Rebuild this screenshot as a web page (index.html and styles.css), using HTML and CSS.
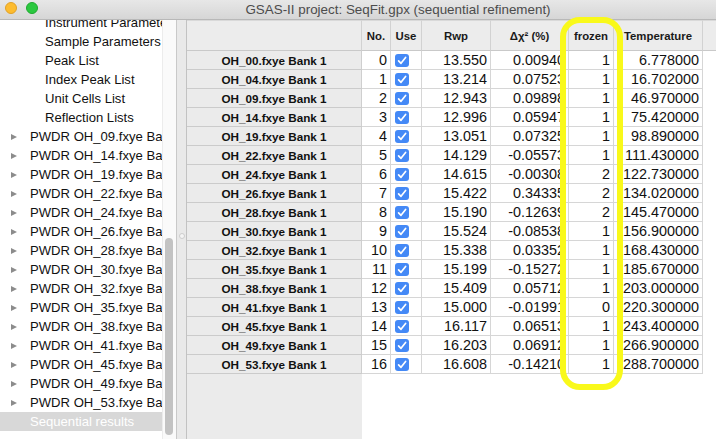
FILE: index.html
```html
<!DOCTYPE html>
<html>
<head>
<meta charset="utf-8">
<link rel="stylesheet" href="styles.css">
</head>
<body>
<div class="window">
  <div class="titlebar">
    <div class="lights"><span class="light yellow"></span><span class="light green"></span></div>
    <div class="title">GSAS-II project: SeqFit.gpx (sequential refinement)</div>
  </div>
  <div class="main">
    <div class="tree">
      <div class="tree-list">
        <div class="tree-row child">Instrument Parameters</div>
        <div class="tree-row child">Sample Parameters</div>
        <div class="tree-row child">Peak List</div>
        <div class="tree-row child">Index Peak List</div>
        <div class="tree-row child">Unit Cells List</div>
        <div class="tree-row child">Reflection Lists</div>
        <div class="tree-row parent"><span class="tri"></span>PWDR OH_09.fxye Bank 1</div>
        <div class="tree-row parent"><span class="tri"></span>PWDR OH_14.fxye Bank 1</div>
        <div class="tree-row parent"><span class="tri"></span>PWDR OH_19.fxye Bank 1</div>
        <div class="tree-row parent"><span class="tri"></span>PWDR OH_22.fxye Bank 1</div>
        <div class="tree-row parent"><span class="tri"></span>PWDR OH_24.fxye Bank 1</div>
        <div class="tree-row parent"><span class="tri"></span>PWDR OH_26.fxye Bank 1</div>
        <div class="tree-row parent"><span class="tri"></span>PWDR OH_28.fxye Bank 1</div>
        <div class="tree-row parent"><span class="tri"></span>PWDR OH_30.fxye Bank 1</div>
        <div class="tree-row parent"><span class="tri"></span>PWDR OH_32.fxye Bank 1</div>
        <div class="tree-row parent"><span class="tri"></span>PWDR OH_35.fxye Bank 1</div>
        <div class="tree-row parent"><span class="tri"></span>PWDR OH_38.fxye Bank 1</div>
        <div class="tree-row parent"><span class="tri"></span>PWDR OH_41.fxye Bank 1</div>
        <div class="tree-row parent"><span class="tri"></span>PWDR OH_45.fxye Bank 1</div>
        <div class="tree-row parent"><span class="tri"></span>PWDR OH_49.fxye Bank 1</div>
        <div class="tree-row parent"><span class="tri"></span>PWDR OH_53.fxye Bank 1</div>
        <div class="tree-row selected">Sequential results</div>
      </div>
    </div>
    <div class="vscroll"><div class="thumb"></div></div>
    <div class="sash"><div class="grip"></div></div>
    <div class="grid">
      <div class="hc corner"></div>
      <div class="hc">No.</div>
      <div class="hc">Use</div>
      <div class="hc">Rwp</div>
      <div class="hc">Δχ² (%)</div>
      <div class="hc">frozen</div>
      <div class="hc">Temperature</div>
      <div class="hc filler"></div>

      <div class="rl">OH_00.fxye Bank 1</div><div class="c">0</div><div class="c use"><span class="cb"></span></div><div class="c">13.550</div><div class="c">0.00940</div><div class="c">1</div><div class="c">6.778000</div><div class="f"></div>
      <div class="rl">OH_04.fxye Bank 1</div><div class="c">1</div><div class="c use"><span class="cb"></span></div><div class="c">13.214</div><div class="c">0.07523</div><div class="c">1</div><div class="c">16.702000</div><div class="f"></div>
      <div class="rl">OH_09.fxye Bank 1</div><div class="c">2</div><div class="c use"><span class="cb"></span></div><div class="c">12.943</div><div class="c">0.09898</div><div class="c">1</div><div class="c">46.970000</div><div class="f"></div>
      <div class="rl">OH_14.fxye Bank 1</div><div class="c">3</div><div class="c use"><span class="cb"></span></div><div class="c">12.996</div><div class="c">0.05947</div><div class="c">1</div><div class="c">75.420000</div><div class="f"></div>
      <div class="rl">OH_19.fxye Bank 1</div><div class="c">4</div><div class="c use"><span class="cb"></span></div><div class="c">13.051</div><div class="c">0.07325</div><div class="c">1</div><div class="c">98.890000</div><div class="f"></div>
      <div class="rl">OH_22.fxye Bank 1</div><div class="c">5</div><div class="c use"><span class="cb"></span></div><div class="c">14.129</div><div class="c">-0.05573</div><div class="c">1</div><div class="c">111.430000</div><div class="f"></div>
      <div class="rl">OH_24.fxye Bank 1</div><div class="c">6</div><div class="c use"><span class="cb"></span></div><div class="c">14.615</div><div class="c">-0.00308</div><div class="c">2</div><div class="c">122.730000</div><div class="f"></div>
      <div class="rl">OH_26.fxye Bank 1</div><div class="c">7</div><div class="c use"><span class="cb"></span></div><div class="c">15.422</div><div class="c">0.34335</div><div class="c">2</div><div class="c">134.020000</div><div class="f"></div>
      <div class="rl">OH_28.fxye Bank 1</div><div class="c">8</div><div class="c use"><span class="cb"></span></div><div class="c">15.190</div><div class="c">-0.12639</div><div class="c">2</div><div class="c">145.470000</div><div class="f"></div>
      <div class="rl">OH_30.fxye Bank 1</div><div class="c">9</div><div class="c use"><span class="cb"></span></div><div class="c">15.524</div><div class="c">-0.08538</div><div class="c">1</div><div class="c">156.900000</div><div class="f"></div>
      <div class="rl">OH_32.fxye Bank 1</div><div class="c">10</div><div class="c use"><span class="cb"></span></div><div class="c">15.338</div><div class="c">0.03352</div><div class="c">1</div><div class="c">168.430000</div><div class="f"></div>
      <div class="rl">OH_35.fxye Bank 1</div><div class="c">11</div><div class="c use"><span class="cb"></span></div><div class="c">15.199</div><div class="c">-0.15272</div><div class="c">1</div><div class="c">185.670000</div><div class="f"></div>
      <div class="rl">OH_38.fxye Bank 1</div><div class="c">12</div><div class="c use"><span class="cb"></span></div><div class="c">15.409</div><div class="c">0.05712</div><div class="c">1</div><div class="c">203.000000</div><div class="f"></div>
      <div class="rl">OH_41.fxye Bank 1</div><div class="c">13</div><div class="c use"><span class="cb"></span></div><div class="c">15.000</div><div class="c">-0.01991</div><div class="c">0</div><div class="c">220.300000</div><div class="f"></div>
      <div class="rl">OH_45.fxye Bank 1</div><div class="c">14</div><div class="c use"><span class="cb"></span></div><div class="c">16.117</div><div class="c">0.06513</div><div class="c">1</div><div class="c">243.400000</div><div class="f"></div>
      <div class="rl">OH_49.fxye Bank 1</div><div class="c">15</div><div class="c use"><span class="cb"></span></div><div class="c">16.203</div><div class="c">0.06912</div><div class="c">1</div><div class="c">266.900000</div><div class="f"></div>
      <div class="rl">OH_53.fxye Bank 1</div><div class="c">16</div><div class="c use"><span class="cb"></span></div><div class="c">16.608</div><div class="c">-0.14210</div><div class="c">1</div><div class="c">288.700000</div><div class="f"></div>
    </div>
  </div>
  <div class="highlight"></div>
</div>
</body>
</html>
```

FILE: styles.css
```css
* { box-sizing: border-box; }
html, body { margin: 0; padding: 0; }
body {
  width: 716px;
  height: 439px;
  overflow: hidden;
  font-family: "Liberation Sans", Arial, sans-serif;
  background: #ececec;
  color: #111;
}
.window { position: relative; width: 716px; height: 439px; }

.titlebar {
  height: 20px;
  display: flex;
  align-items: center;
  background: linear-gradient(#e7e7e7, #d6d6d6);
  border-bottom: 1px solid #b8b8b8;
}
.lights { display: flex; gap: 9px; padding-left: 5px; width: 38px; flex: none; margin-top: -3px; }
.light { width: 12px; height: 12px; border-radius: 50%; display: block; }
.yellow { background: #fdbc2f; border: 1px solid #e1a126; }
.green { background: #2bc840; border: 1px solid #1eaa2f; }
.title {
  flex: 1;
  text-align: center;
  padding-left: 42px;
  font-size: 13.4px;
  color: #4c4c4c;
  margin-top: -1px;
  white-space: nowrap;
}

.main { display: flex; height: 419px; }

.tree { width: 162px; flex: none; background: #fff; overflow: hidden; }
.tree-list { margin-top: -7px; }
.tree-row {
  height: 19px;
  display: flex;
  align-items: center;
  white-space: nowrap;
  font-size: 13.1px;
  color: #111;
}
.tree-row.child { padding-left: 45px; }
.tree-row.parent { padding-left: 11px; }
.tree-row.selected { padding-left: 30px; background: #d8d8d8; color: #fff; }
.tri {
  width: 0; height: 0;
  border-left: 6px solid #8c8c8c;
  border-top: 3.5px solid transparent;
  border-bottom: 3.5px solid transparent;
  margin-right: 13px;
  flex: none;
}

.vscroll {
  width: 15px;
  flex: none;
  background: #fafafa;
  border-left: 1px solid #ececec;
  border-right: 1px solid #c9c9c9;
  padding-left: 2px;
}
.thumb {
  width: 8px;
  height: 197px;
  margin-top: 218px;
  border-radius: 4px;
  background: #c3c3c3;
}

.sash {
  width: 10px;
  flex: none;
  background: #e9e9e9;
  border-right: 1px solid #c2c2c2;
  padding-left: 2px;
}
.grip {
  width: 6px; height: 6px;
  border-radius: 50%;
  background: #f5f5f5;
  border: 1px solid #cdcdcd;
  margin-top: 213px;
}

.grid {
  flex: 1;
  display: grid;
  grid-template-columns: 175px 29px 31px 69px 78px 45px 89px 1fr;
  grid-template-rows: 31px repeat(17, 19px);
  align-content: start;
  background: linear-gradient(to right, #ebebeb 175px, #fff 175px);
}
.hc {
  background: #ececec;
  border-right: 1px solid #d2d2d2;
  border-bottom: 1px solid #c9c9c9;
  border-top: 1px solid #d9d9d9;
  font-size: 11.4px;
  font-weight: bold;
  color: #1a1a1a;
  display: flex;
  align-items: center;
  justify-content: center;
  white-space: nowrap;
}
.hc.filler { border-right: none; }
.rl {
  background: #ebebeb;
  border-right: 1px solid #cfcfcf;
  border-bottom: 1px solid #cbcbcb;
  font-size: 11.7px;
  font-weight: bold;
  color: #111;
  display: flex;
  align-items: center;
  justify-content: center;
  white-space: nowrap;
}
.c {
  border-right: 1px solid #d6d6d6;
  border-bottom: 1px solid #d6d6d6;
  font-size: 14.4px;
  color: #111;
  display: flex;
  align-items: center;
  justify-content: flex-end;
  padding-right: 3px;
  white-space: nowrap;
  overflow: hidden;
}
.c.use { justify-content: flex-start; padding-left: 4px; }
.cb {
  width: 14px;
  height: 13px;
  border-radius: 3px;
  background: #4489f6 url("data:image/svg+xml;utf8,<svg xmlns='http://www.w3.org/2000/svg' width='14' height='13' viewBox='0 0 14 13'><path d='M3.6 6.8 L6 9.3 L10.6 3.4' fill='none' stroke='white' stroke-width='1.7' stroke-linecap='round' stroke-linejoin='round'/></svg>") no-repeat center;
  display: block;
}
.f { }

.highlight {
  position: absolute;
  left: 560px;
  top: 17px;
  width: 63px;
  height: 373px;
  border: 6.5px solid #f9f91a;
  border-radius: 20px;
  pointer-events: none;
}
```
